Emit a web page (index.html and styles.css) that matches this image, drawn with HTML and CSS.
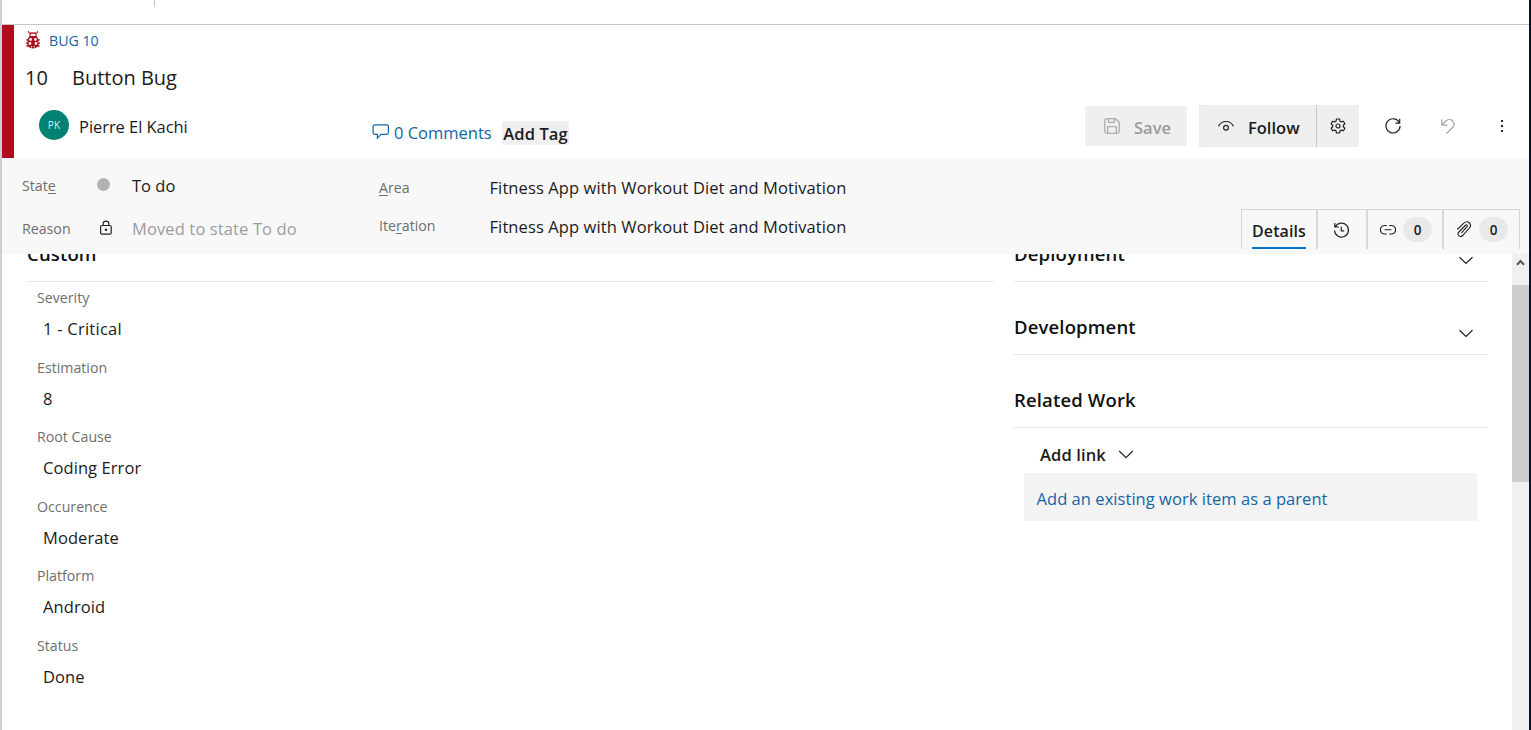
FILE: index.html
```html
<!DOCTYPE html>
<html lang="en">
<head>
<meta charset="utf-8">
<title>Bug 10 - Button Bug</title>
<link rel="stylesheet" href="styles.css">
</head>
<body>
<div class="window">
  <div class="strip"><span class="strip-mark"></span></div>
  <header class="header">
    <div class="crumb">
      <svg class="bug" width="16" height="18" viewBox="0 0 16 18">
        <path d="M3.500 .2v1.300l1.700 1M12.500 .2v1.300l-1.700 1M4.500 2h7" fill="none" stroke="#b00b1e"/>
        <path d="M5 6V3.500l1-1.200h4l1 1.200V6z" fill="#fff" stroke="#b00b1e" stroke-width="1.100"/>
        <path d="M5.500 5h5q2.300 1 2.800 3.200h1.500v1.300h-1.300v2h1.500v1.300h-1.300v1.700h.9v1.300h-2.100Q11 17.600 8 17.600t-4.500-1.800H1.400v-1.300h.9v-1.700H1v-1.300h1.500v-2H1.200V8.200h1.500Q3.200 6 5.500 5z" fill="#b00b1e"/>
        <g fill="#fff"><circle cx="5.600" cy="8.500" r="1.400"/><circle cx="10.400" cy="8.500" r="1.400"/><circle cx="5" cy="12.500" r="1.400"/><circle cx="11" cy="12.500" r="1.400"/><circle cx="6.600" cy="15.700" r=".7"/><circle cx="9.400" cy="15.700" r=".7"/></g>
      </svg>
      <a class="crumb-link">BUG 10</a>
    </div>
    <div class="title-row"><span class="item-id">10</span><span class="title">Button Bug</span></div>
    <div class="actions">
      <span class="avatar">PK</span>
      <span class="assignee">Pierre El Kachi</span>
      <span class="comments">
        <svg width="18" height="17" viewBox="0 0 18 17" fill="none" stroke="#1564a5" stroke-width="1.200"><path d="M3 .8h11.500q1.900 0 1.900 1.800v6q0 1.800-1.900 1.800H9L5.400 14.300v-3.900H3q-1.900 0-1.900-1.800v-6Q1.100.8 3 .8z"/></svg>
        <span class="comments-text">0 Comments</span>
      </span>
      <span class="add-tag">Add Tag</span>
      <span class="btn save">
        <svg width="16" height="16" viewBox="0 0 16 16" fill="none" stroke="#a0a0a0" stroke-width="1.100"><path d="M2.500.8h9l3.700 3.500v9.200q0 1.700-1.700 1.700h-11Q.8 15.200.8 13.500v-11Q.8.8 2.500.8zM4.500.8v3.500h5.700V.8M3.700 15V8.700h8.600V15"/></svg>
        <span class="save-text">Save</span>
      </span>
      <span class="follow-group">
        <span class="btn follow">
          <svg width="18" height="16" viewBox="0 0 18 16" fill="none" stroke="#222" stroke-width="1.200"><path d="M1.500 8.300Q4 3.500 9 3.500t7.500 4.800"/><circle cx="9" cy="9.700" r="2.400"/></svg>
          <span class="follow-text">Follow</span>
        </span>
        <span class="btn gear">
          <svg width="16" height="16" viewBox="0 0 16 16" fill="none" stroke="#222" stroke-width="1.200" stroke-linejoin="round"><path d="M6.500 1h3l.5 2.200 1.300.7 2.100-.7 1.500 2.600L13.300 7.300v1.400l1.600 1.500-1.500 2.600-2.100-.7-1.300.7L9.500 15h-3L6 12.800l-1.300-.7-2.100.7-1.500-2.600L2.700 8.700V7.300L1.100 5.800l1.500-2.600 2.100.7L6 3.200z"/><circle cx="8" cy="8" r="2"/></svg>
        </span>
      </span>
      <svg class="refresh" width="18" height="18" viewBox="0 0 18 18" fill="none" stroke="#222" stroke-width="1.200"><path d="M15.500 6A7.100 7.100 0 1 0 16.100 9M15.700 1.800v4.400h-4.400"/></svg>
      <svg class="undo" width="16" height="17" viewBox="0 0 16 17" fill="none" stroke="#a6a6a6" stroke-width="1.200"><path d="M1.800 1.500v5.700h5.700M2 7l4.200-4.200Q9.400.2 12.500 2.800q3 3.200.3 6.500L6.500 15.500"/></svg>
      <svg class="more" width="4" height="14" viewBox="0 0 4 14" fill="#222"><path d="M1 1h2v2H1zM1 6h2v2H1zM1 11h2v2H1z"/></svg>
    </div>
  </header>

  <section class="status">
    <div class="state-col">
      <div class="pair state"><span class="label">Stat<u>e</u></span><i class="dot"></i><span class="value to-do">To do</span></div>
      <div class="pair reason"><span class="label">Reason</span>
        <svg class="lock" width="14" height="16" viewBox="0 0 14 16" fill="none" stroke="#222" stroke-width="1.200"><rect x="1.600" y="5.500" width="10.600" height="8.600" rx="1.400"/><path d="M4.200 5.500V3.600q0-2.500 2.800-2.500t2.800 2.500v1.900"/><rect x="6.500" y="9.300" width="1" height="1"/></svg>
        <span class="value muted">Moved to state To do</span></div>
    </div>
    <div class="area-col">
      <div class="path"><span class="label"><u>A</u>rea</span><span class="value long">Fitness App with Workout Diet and Motivation</span></div>
      <div class="path"><span class="label iteration">Ite<u>r</u>ation</span><span class="value long">Fitness App with Workout Diet and Motivation</span></div>
    </div>
    <nav class="tabs">
      <span class="tab details"><span class="details-text">Details</span></span>
      <span class="tab history"><svg width="17" height="17" viewBox="0 0 17 17" fill="none" stroke="#222" stroke-width="1.200"><path d="M2.300 4.800A7 7 0 1 1 1.500 8.500M1.800 1v4h4.200M8.300 4.800v4h2.900"/></svg></span>
      <span class="tab links"><svg width="16" height="12" viewBox="0 0 16 12" fill="none" stroke="#222" stroke-width="1.200"><path d="M6.800 1.500H4.700a4.200 4.200 0 0 0 0 8.500h2.100M9.200 1.500h2.100a4.200 4.200 0 0 1 0 8.500H9.200M4.500 5.750h7"/></svg><span class="count">0</span></span>
      <span class="tab files"><svg width="16" height="17" viewBox="0 0 16 17" fill="none" stroke="#222" stroke-width="1.100"><path d="M1.300 8.500 7.800 2.200C9.600.5 12 .6 13.400 2c1.400 1.400 1.400 3.400 0 5L6.600 14.500c-1.100 1.100-2.700 1.200-3.800.2-1-1-1-2.600.1-3.700L9.700 4"/><path d="M9.700 4q1 -.5 1.500.2.400.6-.2 1.500L5.500 11.800"/></svg><span class="count">0</span></span>
    </nav>
  </section>

  <main class="body">
    <div class="scroll">
      <div class="left">
        <h2 class="group custom">Custom</h2>
        <dl class="fields">
          <dt>Severity</dt><dd class="severity">1 - Critical</dd>
          <dt>Estimation</dt><dd>8</dd>
          <dt>Root Cause</dt><dd>Coding Error</dd>
          <dt>Occurence</dt><dd>Moderate</dd>
          <dt>Platform</dt><dd>Android</dd>
          <dt>Status</dt><dd>Done</dd>
        </dl>
      </div>
      <div class="right">
        <h2 class="group"><span>Deployment</span><svg class="chev" width="16" height="9" viewBox="0 0 16 9"><path d="M1.500 1.200 8 7.500l6.500-6.300"/></svg></h2>
        <h2 class="group"><span>Development</span><svg class="chev" width="16" height="9" viewBox="0 0 16 9"><path d="M1.500 1.200 8 7.500l6.500-6.300"/></svg></h2>
        <h2 class="group"><span>Related Work</span></h2>
        <div class="add-link"><span class="add-link-text">Add link</span><svg width="16" height="9" viewBox="0 0 16 9"><path d="M1.200 1 8 7.700 14.800 1"/></svg></div>
        <div class="parent"><a class="parent-link">Add an existing work item as a parent</a></div>
      </div>
    </div>
    <div class="scrollbar">
      <div class="arrow"><svg width="9" height="7" viewBox="0 0 9 7"><path d="M1 5.700 4.500 2 8 5.700" fill="none" stroke="#555" stroke-width="2"/></svg></div>
      <div class="thumb"></div>
    </div>
  </main>
</div>
</body>
</html>
```
FILE: styles.css
```css
* { box-sizing: border-box; }
body { margin: 0; background: #fff; color: #1b1b1b; font: 16.5px "Open Sans", "Noto Sans", sans-serif; overflow: hidden; }
svg { display: block; flex: none; }
span, a { white-space: nowrap; }
.window { width: 1531px; height: 730px; display: flex; flex-direction: column; border-left: 2px solid #cfcfcf; border-right: 2px solid #0b1022; overflow: hidden; }
.strip { height: 25px; border-bottom: 1px solid #c8c8c8; padding-left: 152px; }
.strip-mark { display: block; width: 1px; height: 7px; background: #c4c4c4; }

.header { height: 133px; border-left: 12px solid #b00b1e; padding-left: 11px; }
.crumb { height: 32px; display: flex; align-items: center; }
.bug { margin-top: -2px; }
.crumb-link { margin: -2px 0 0 8px; font-size: 14.2px; color: #1564a5; }
.title-row { height: 41px; display: flex; align-items: center; font-size: 20px; }
.item-id { width: 47px; }
.actions { height: 56px; display: flex; align-items: center; }
.avatar { width: 30px; height: 30px; margin: -2px 10px 0 14px; border-radius: 50%; background: #008272; color: #d9efec; font-size: 10px; line-height: 30px; text-align: center; letter-spacing: .3px; }
.assignee { width: 293px; letter-spacing: -.05px; }
.comments { width: 130px; display: flex; align-items: center; gap: 4px; color: #1564a5; padding-top: 12px; }
.comments-text { line-height: 24px; padding-top: 1px; }
.add-tag { width: 67px; height: 24px; line-height: 26px; margin-top: 13px; background: #efefef; border-radius: 2px; font-weight: 600; text-align: center; letter-spacing: .08px; }
.btn { display: flex; align-items: center; background: #efefef; font-weight: 600; }
.save { width: 102px; height: 40px; margin-left: 516px; padding-left: 19px; gap: 14px; border-radius: 3px; color: #9b9b9b; }
.follow-group { display: flex; margin-left: 12px; gap: 1px; background: #c8c8c8; border-radius: 3px; overflow: hidden; }
.follow { width: 117px; height: 42px; padding-left: 18px; gap: 13px; }
.save-text, .follow-text { padding-top: 2px; }
.gear { width: 42px; height: 42px; justify-content: center; }
.refresh { margin-left: 24.500px; }
.undo { margin-left: 38px; }
.more { margin-left: 44.500px; }

.status { height: 96px; background: #f8f8f8; display: flex; padding-left: 20px; }
.label { font-size: 14.2px; color: #6e6e6e; }
u { text-underline-offset: 2px; }
.state-col { width: 357px; padding-top: 6px; }
.pair { height: 43px; display: flex; align-items: center; }
.pair .label { width: 75px; }
.dot { width: 13px; height: 13px; margin-top: -3px; border-radius: 50%; background: #b2b2b2; }
.state .value { margin-left: 22px; }
.lock { margin: -2px 19px 0 2px; }
.muted { color: #9c9c9c; letter-spacing: .12px; }
.area-col { width: 862px; padding-top: 10px; }
.path { height: 39px; display: flex; align-items: center; }
.path .label { width: 110.500px; }
.long { letter-spacing: .1px; }
.path .iteration { margin-top: -3px; }
.tabs { height: 40px; margin-top: 51px; display: flex; border: 1px solid #d6d6d6; border-bottom: 0; }
.tab { display: flex; align-items: center; border-right: 2px solid #d8d8d8; }
.details { width: 76px; padding: 2px 0 0 10px; }
.details-text { width: 54px; height: 37px; line-height: 38px; border-bottom: 2px solid #0078d4; font-weight: 600; font-size: 16px; letter-spacing: .1px; }
.history { width: 50px; padding: 1px 0 0 15px; }
.links { width: 76px; padding-left: 12px; gap: 7px; }
.files { width: 75px; padding-left: 12px; gap: 7px; border-right: 0; }
.count { width: 29px; height: 25px; border-radius: 13px; background: #e9e9e9; font-size: 13.5px; font-weight: 600; line-height: 27px; text-align: center; }

.body { height: 476px; display: flex; overflow: hidden; }
.scroll { width: 1510px; display: flex; margin-top: -45px; padding-left: 25px; gap: 20px; }
.left { width: 967px; }
.right { width: 473px; }
.group { height: 73px; margin: 0; padding: 22px 0 4px; border-bottom: 1px solid #e6e6e6; font-size: 18.5px; line-height: 46px; font-weight: 600; letter-spacing: .15px; color: #111; display: flex; justify-content: space-between; }
.chev { margin: 25px 13px 0 0; }
.chev path, .add-link path { fill: none; stroke: #222; stroke-width: 1.200; }
.fields { margin: 0; padding-left: 10px; }
dt { height: 32px; line-height: 32px; font-size: 14.2px; color: #6e6e6e; }
dd { height: 37.5px; line-height: 30px; margin: 0; padding-left: 6px; letter-spacing: .08px; }
.severity { letter-spacing: .25px; }
.add-link { height: 45px; padding: 7px 0 0 26px; display: flex; align-items: center; gap: 12px; font-weight: 600; letter-spacing: .12px; }
.parent { height: 48px; margin: 0 10px; padding: 2px 0 0 12.500px; background: #f3f3f3; display: flex; align-items: center; color: #1564a5; letter-spacing: .05px; }
.scrollbar { width: 17px; background: #f0f0f0; }
.arrow { height: 31px; padding: 5px 0 0 4px; }
.thumb { height: 197px; background: #cdcdcd; }
```
